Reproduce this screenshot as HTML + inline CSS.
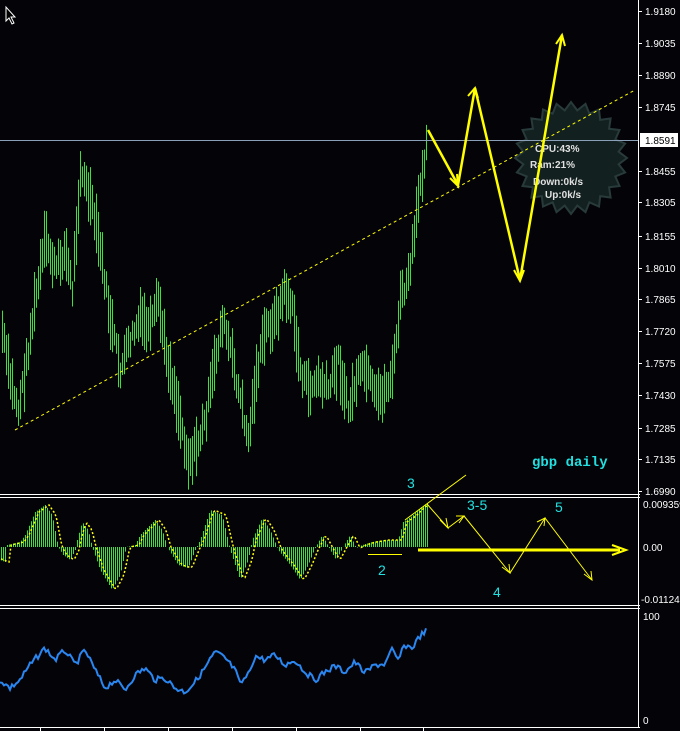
<!DOCTYPE html>
<html><head><meta charset="utf-8">
<style>
html,body{margin:0;padding:0;background:#040308;width:680px;height:731px;overflow:hidden;font-family:"Liberation Sans",sans-serif}
svg{position:absolute;left:0;top:0}
.ax{font:10px "Liberation Sans",sans-serif;fill:#fff}
</style></head><body>
<svg id="s" width="680" height="731" viewBox="0 0 680 731">
<rect width="680" height="731" fill="#040308"/>
<polygon id="star" fill="#132020" stroke="#283a3a" stroke-width="2"/>
<g id="bars" stroke="#3ee03e" stroke-width="1"></g>
<g id="hist" stroke="#3ee03e" stroke-width="1"></g>
<polyline id="sig" fill="none" stroke="#ffff00" stroke-width="1.5" stroke-dasharray="2,2"/>
<polyline id="blue" fill="none" stroke="#2a86f0" stroke-width="2"/>
<line x1="0" y1="140.5" x2="638" y2="140.5" stroke="#8aa0b8"/>
<line x1="15" y1="430" x2="635" y2="90" stroke="#ffff00" stroke-dasharray="3,3"/>
<g fill="#e0e0e0" font-family="Liberation Sans,sans-serif" font-size="10" font-weight="bold">
<text x="535" y="152">CPU:43%</text>
<text x="530" y="168">Ram:21%</text>
<text x="533" y="185">Down:0k/s</text>
<text x="545" y="198">Up:0k/s</text>
</g>
<polyline points="428,130 458,185 475,88 520,280 562,35" fill="none" stroke="#ffff00" stroke-width="2.5"/>
<path d="M450,178 L458,186 L457,174 M468,96 L475,88 L478,98 M514,270 L520,281 L524,270 M556,44 L562,35 L565,46" fill="none" stroke="#ffff00" stroke-width="2"/>
<g stroke="#fff" stroke-width="1">
<line x1="638.5" y1="0" x2="638.5" y2="728"/>
<line x1="0" y1="494.5" x2="640" y2="494.5"/><line x1="0" y1="497.5" x2="640" y2="497.5"/>
<line x1="0" y1="605.5" x2="640" y2="605.5"/><line x1="0" y1="608.5" x2="640" y2="608.5"/>
<line x1="0" y1="727.5" x2="640" y2="727.5"/>
<line x1="40.5" y1="727" x2="40.5" y2="731"/><line x1="104.5" y1="727" x2="104.5" y2="731"/>
<line x1="168.5" y1="727" x2="168.5" y2="731"/><line x1="232.5" y1="727" x2="232.5" y2="731"/>
<line x1="296.5" y1="727" x2="296.5" y2="731"/><line x1="360.5" y1="727" x2="360.5" y2="731"/>
<line x1="423.5" y1="727" x2="423.5" y2="731"/>
</g>
<g id="ticks" stroke="#fff"></g>
<g class="ax" id="labels"></g>
<rect x="640" y="133" width="38" height="14" fill="#fff"/>
<text x="645" y="144" font-size="10" fill="#000">1.8591</text>
<text x="643" y="508" class="ax">0.009359</text>
<text x="643" y="551" class="ax">0.00</text>
<text x="641" y="603" class="ax">-0.01124</text>
<text x="643" y="620" class="ax">100</text>
<text x="643" y="724" class="ax">0</text>
<g fill="#22e0e0" font-family="Liberation Mono,monospace" font-size="14" font-weight="bold">
<text x="532" y="466">gbp daily</text>
</g>
<g fill="#22e0e0" font-family="Liberation Sans,sans-serif" font-size="14">
<text x="407" y="488">3</text><text x="467" y="510">3-5</text><text x="555" y="512">5</text>
<text x="378" y="575">2</text><text x="493" y="597">4</text>
</g>
<line x1="405" y1="520" x2="466" y2="475" stroke="#ffff00"/>
<line x1="368" y1="554.5" x2="402" y2="554.5" stroke="#ffff00"/>
<line x1="418" y1="550" x2="620" y2="550" stroke="#ffff00" stroke-width="3"/>
<path d="M612,545 L626,550 L612,555" fill="none" stroke="#ffff00" stroke-width="2"/>
<polyline points="427,504 448,528 464,516 510,573 545,518 592,580" fill="none" stroke="#ffff00"/>
<path d="M440,520 L448,528 L446,518 M456,516 L464,516 L459,523 M502,567 L510,573 L509,564 M537,522 L545,518 L544,526 M584,574 L592,580 L591,571" fill="none" stroke="#ffff00"/>
<path d="M6,7 L6,21 L9,18 L12,24 L14,23 L11,17 L15,17 Z" fill="#000" stroke="#fff"/>
</svg>
<script>
var NS="http://www.w3.org/2000/svg";
function el(p,t,a){var e=document.createElementNS(NS,t);for(var k in a)e.setAttribute(k,a[k]);p.appendChild(e);return e}
function interp(pts,x){for(var i=0;i<pts.length-1;i++){if(x<=pts[i+1][0]){var a=pts[i],b=pts[i+1],t=(x-a[0])/(b[0]-a[0]);return a[1]+(b[1]-a[1])*t}}return pts[pts.length-1][1]}
var P=[[0,320],[10,380],[18,410],[25,370],[35,300],[45,240],[55,270],[65,250],[72,290],[80,170],[90,200],[100,250],[110,320],[120,370],[130,340],[140,320],[150,330],[158,300],[165,350],[172,380],[180,420],[188,460],[195,450],[205,420],[215,360],[222,320],[230,350],[240,400],[248,440],[255,380],[265,330],[275,320],[285,290],[292,310],[300,370],[308,390],[318,380],[328,390],[338,360],[348,410],[356,380],[365,370],[375,400],[385,390],[393,370],[400,300],[408,280],[415,230],[420,180],[427,140]];
var g=document.getElementById('bars'),seed=7;function rnd(){seed=(seed*9301+49297)%233280;return seed/233280}
for(var x=2;x<=427;x+=2){var c=interp(P,x)+(rnd()-.5)*16,h=20+rnd()*40;el(g,'line',{x1:x+.5,x2:x+.5,y1:c-h/2,y2:c+h/2})}
var H=[[0,560],[5,562],[7,545],[20,542],[25,535],[35,512],[45,505],[52,515],[58,547],[63,555],[70,560],[75,550],[77,540],[82,522],[88,530],[92,547],[100,570],[112,590],[120,575],[126,547],[135,545],[140,535],[155,520],[162,530],[167,547],[178,565],[188,568],[195,550],[200,540],[210,510],[222,515],[230,550],[240,580],[248,560],[252,540],[262,518],[270,530],[278,550],[290,565],[300,580],[308,565],[314,550],[322,535],[330,550],[336,560],[344,545],[350,535],[356,548],[362,545],[372,542],[385,540],[398,540],[403,522],[412,516],[420,508],[427,503]];
var hg=document.getElementById('hist'),sp=[];
for(var x=1;x<=427;x+=2){var v=interp(H,x);el(hg,'line',{x1:x+.5,x2:x+.5,y1:547,y2:v});sp.push(x+','+interp(H,x-4))}
document.getElementById('sig').setAttribute('points',sp.join(' '));
var B=[[0,680],[10,688],[20,680],[30,665],[45,648],[55,660],[65,650],[75,665],[85,650],[95,670],[105,688],[115,680],[125,690],[135,675],[145,668],[155,680],[165,678],[175,688],[185,692],[195,682],[205,668],[215,652],[225,658],[235,670],[240,684],[248,675],[255,656],[265,660],[275,655],[285,665],[295,660],[305,672],[315,680],[325,672],[335,666],[345,672],[355,662],[365,673],[375,665],[385,664],[392,650],[398,660],[405,645],[412,648],[420,636],[427,630]];
var bp=[];for(var x=0;x<=427;x+=2)bp.push(x+','+(interp(B,x)+(rnd()-.5)*6));
document.getElementById('blue').setAttribute('points',bp.join(' '));
var st=[],cx=571,cy=158,n=24;for(var i=0;i<n*2;i++){var r=i%2?48:56,a=i*Math.PI/n;st.push((cx+r*Math.cos(a)).toFixed(1)+','+(cy+r*Math.sin(a)).toFixed(1))}
document.getElementById('star').setAttribute('points',st.join(' '));
var L=[["1.9180",11],["1.9035",43],["1.8890",75],["1.8745",107],["1.8455",171],["1.8305",202],["1.8155",236],["1.8010",268],["1.7865",299],["1.7720",331],["1.7575",363],["1.7430",395],["1.7285",428],["1.7135",459],["1.6990",491]];
var lg=document.getElementById('labels'),tg=document.getElementById('ticks');
L.forEach(function(l){var t=el(lg,'text',{x:645,y:l[1]+4});t.textContent=l[0];el(tg,'line',{x1:638,x2:642,y1:l[1]+.5,y2:l[1]+.5})});
</script>
</body></html>
